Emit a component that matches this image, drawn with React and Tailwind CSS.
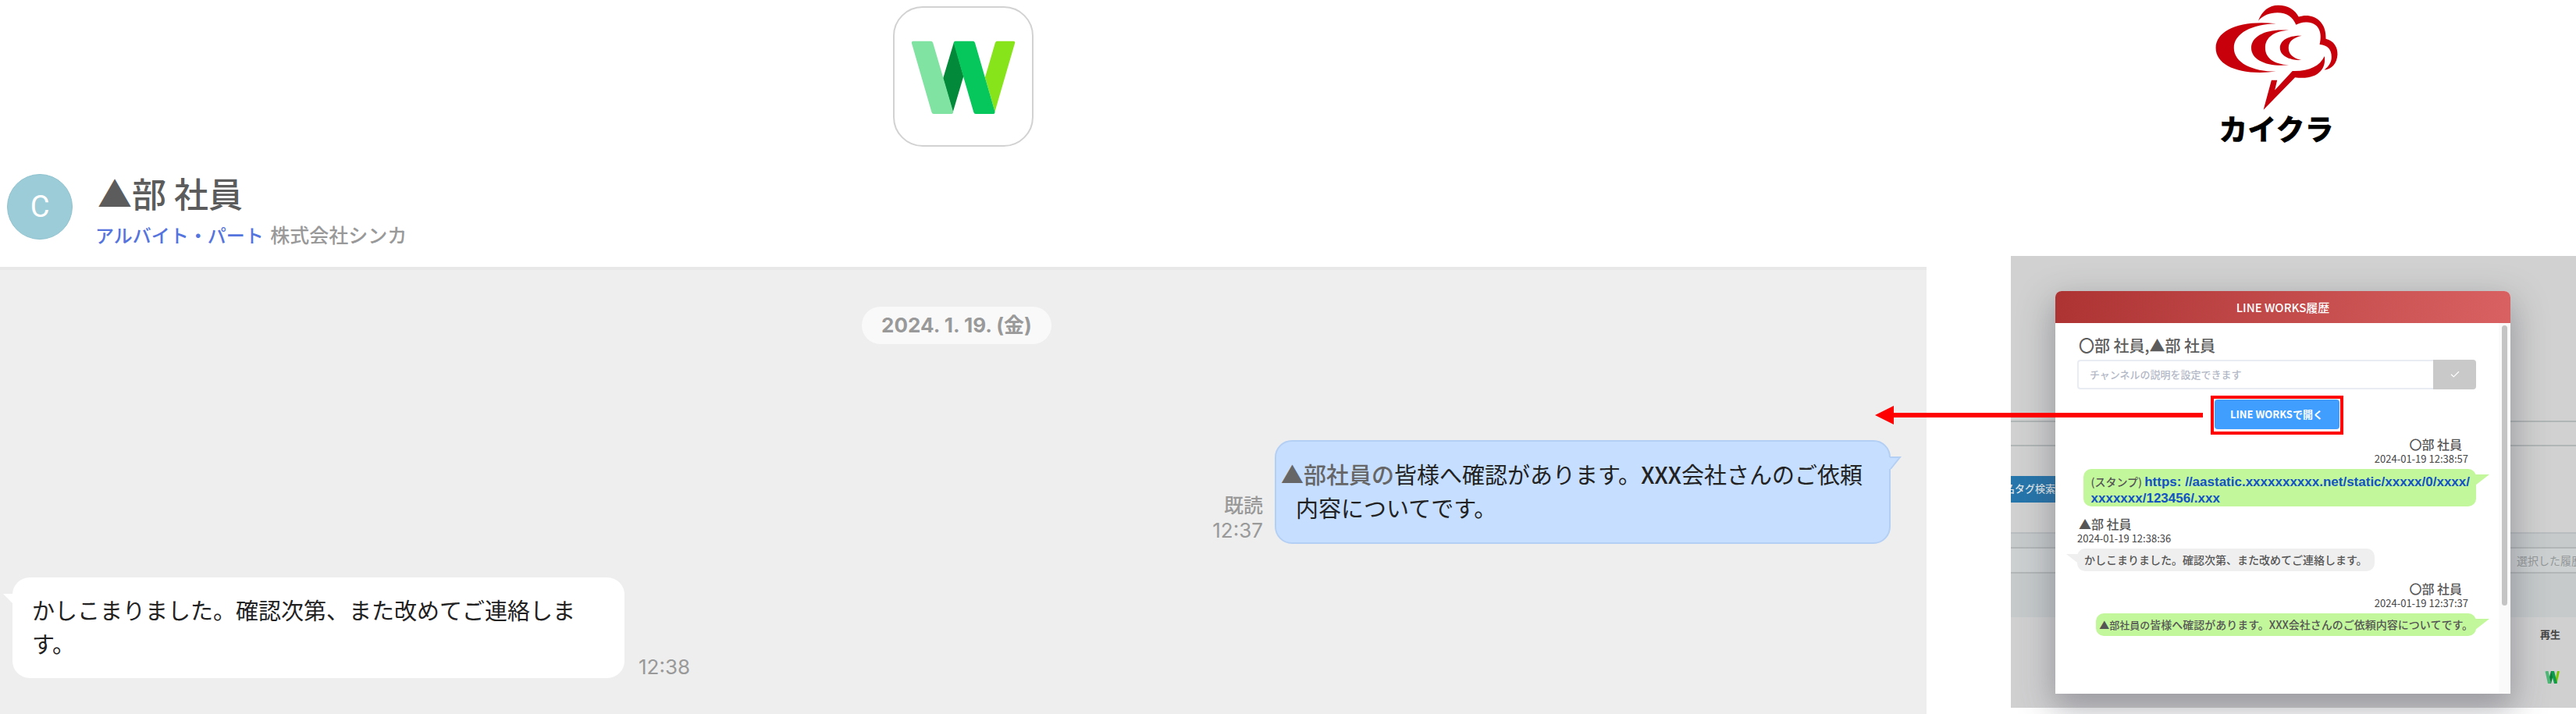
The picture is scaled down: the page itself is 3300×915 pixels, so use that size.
import { Check } from 'lucide-react';

const jp = "font-['Noto_Sans_CJK_JP','Noto_Sans',sans-serif]";

const WorksMark = ({ className }) => (
  <svg viewBox="260 158 402 286" className={className} aria-hidden="true">
    <path d="M592 160H655Q662 160 660 168L583 432L545 300L584 167Q586 160 592 160Z" fill="#88e41a" />
    <path d="M425 164L462 296L421 434L383 304Z" fill="#02893a" />
    <path d="M268 160H336Q342 160 344 166L422 432Q423 441 415 441H347Q341 441 339 434L262 168Q261 160 268 160Z" fill="#80e3a2" />
    <path d="M430 160H498Q504 160 506 166L583 432Q584 441 577 441H509Q503 441 501 434L424 168Q424 160 430 160Z" fill="#06c75b" />
  </svg>
);

const WorksBadge = () => (
  <svg viewBox="0 0 20 16" className="mt-[37px] h-4 w-5" fill="none" strokeWidth="4" aria-hidden="true">
    <path d="M14 16L17.5 0" stroke="#78c800" strokeWidth="3" />
    <path d="M6 16L10 0" stroke="#087d38" />
    <path d="M2.5 0L6 16" stroke="#4fb877" />
    <path d="M10 0L14 16" stroke="#0d9c4b" />
  </svg>
);

const KaikuraMark = () => (
  <svg viewBox="174 16 472 407" className="h-[135px] w-[157px]" fill="#c7000b" aria-hidden="true">
    <path d="M339 78C354 39 381 18 416 18C453 18 482 36 495 63C541 46 603 71 600 148C632 156 646 181 645 209C643 243 623 266 594 268C612 254 622 238 622 218C622 188 606 173 576 170C588 122 572 86 527 84C510 83 497 87 485 94C472 63 450 47 413 47C382 47 359 57 339 78Z" />
    <path d="M408 89C270 74 175 114 175 183C175 252 270 291 408 274C316 274 245 240 245 183C245 126 316 91 408 89Z" />
    <path d="M457 115C372 107 312 136 312 183C312 229 372 257 457 249C400 246 366 222 366 183C366 143 400 118 457 115Z" />
    <path d="M507 136C458 134 423 153 423 183C423 212 458 231 505 230C473 222 456 207 456 183C456 159 473 144 507 136Z" />
    <path d="M595 215C602 266 568 308 481 297L359 422L390 308H412L403 346L471 272C535 274 576 254 595 215Z" />
  </svg>
);

const Message = ({ name, time, mine, first, children }) => (
  <div className={`flex flex-col ${mine ? 'items-end' : 'items-start'} ${first ? 'mt-[2px]' : 'mt-3'}`}>
    <span className={`text-[16px] leading-[21px] text-[#555] ${mine ? 'pr-[18px]' : 'pl-[2px]'}`}>{name}</span>
    <time className={`text-[13px] leading-4 font-normal text-[#444] ${mine ? 'pr-[10px]' : ''}`}>{time}</time>
    <div
      className={`relative mt-[5px] rounded-[10px] text-[14px] text-[#555] ${
        mine ? 'bg-[#c3f79b]' : 'bg-[#efefef]'
      }`}
    >
      {children}
      <svg
        viewBox="0 0 18 14"
        className={`absolute top-[7px] h-[14px] w-[18px] ${mine ? 'left-full -ml-px' : 'right-full -mr-1 -scale-x-100'}`}
        aria-hidden="true"
      >
        <path d="M0 0H18L0 14Z" fill={mine ? '#c3f79b' : '#efefef'} />
      </svg>
    </div>
  </div>
);

const Chat = () => (
  <section className="flex min-w-0 flex-[2468] flex-col">
    <div className="flex justify-center pt-2">
      <div className="flex size-[180px] items-center justify-center rounded-[38px] border-2 border-[#d2d2d2] bg-white pt-[3px]">
        <WorksMark className="h-[95px] w-[134px]" />
      </div>
    </div>

    <header className="flex items-start pt-[35px] pb-[23px] pl-[9px]">
      <div className="flex size-[84px] items-center justify-center rounded-full border border-[#8fc3cf] bg-[#9bccd8] font-[Roboto,sans-serif] text-[38px] leading-none text-white">
        C
      </div>
      <div className="ml-[29px] font-medium">
        <h1 className="pl-[3px] text-[44px] leading-[48px] text-[#5c5c5c]">▲部 社員</h1>
        <p className="mt-[11px] text-[24px] leading-9 text-[#999]">
          <a href="#" className="text-[#5574dd]">アルバイト・パート</a>{' '}
          <span className="ml-[3px] text-[25px]">株式会社シンカ</span>
        </p>
      </div>
    </header>

    <div className="border-t-4 border-[#e8e8e8] bg-[#eee] pt-[47px] pb-[46px]">
      <div className="flex justify-center pr-[17px]">
        <time className="rounded-full bg-[#f9f9f9] px-[25px] font-[Inter,'Noto_Sans_CJK_JP',sans-serif] text-[26px] leading-[48px] font-bold text-[#999]">
          2024. 1. 19. (金)
        </time>
      </div>

      <div className="mt-[123px] flex items-end justify-end gap-[15px] pr-[46px]">
        <div className="text-right text-[25px] leading-[34px] font-medium text-[#999]">
          <div>既読</div>
          <time className="block font-[Inter,sans-serif] text-[26px] font-normal">12:37</time>
        </div>
        <div className="relative w-[789px] rounded-[22px] border-2 border-[#b3cff4] bg-[#c6deff] pt-5 pb-[23px] pl-[25px] -indent-[19px] text-[29px] leading-[43px] text-[#222]">
          <span className="font-medium text-[#666]">▲部社員の</span>皆様へ確認があります。
          <span className="font-medium">XXX</span>会社さんのご依頼
          <div className="indent-0">内容についてです。</div>
          <svg viewBox="0 0 16 18" className="absolute top-[19px] left-full h-[18px] w-[16px]" aria-hidden="true">
            <path d="M0 1H14L2 16H0Z" fill="#c6deff" />
            <path d="M1 1H14L2 16" fill="none" stroke="#b3cff4" strokeWidth="2" />
          </svg>
        </div>
      </div>

      <div className="mt-[43px] flex items-end gap-[18px] pl-4">
        <div className="relative w-[784px] rounded-[22px] bg-white pt-5 pb-[23px] pl-[25px] text-[29px] leading-[43px] text-[#222]">
          かしこまりました。確認次第、また改めてご連絡しま
          <br />
          す。
          <svg viewBox="0 0 12 12" className="absolute top-[21px] right-full size-3" aria-hidden="true">
            <path d="M0 0H12V12Z" fill="#fff" />
          </svg>
        </div>
        <time className="font-[Inter,sans-serif] text-[26px] leading-7 text-[#999]">12:38</time>
      </div>
    </div>
  </section>
);

// Page behind the dialog, dimmed
const Backdrop = () => (
  <div className="flex h-full flex-col bg-[#d1d1d1] text-[14px]">
    <div className="h-[211px]" />
    <div className="h-[33px] border-y-2 border-[#b0b5b5]" />
    <div className="flex h-[110px] items-center">
      <div className="flex h-[34px] w-[57px] justify-end overflow-hidden bg-[#2675ab] whitespace-nowrap text-[#dfe5e9]">
        <span className="text-[13px] leading-[31px] font-medium">名タグ検索</span>
      </div>
    </div>
    <div className="h-[109px] border-t-2 border-[#b9bdbf] bg-[#c6cacb] pt-[17px]">
      <div className="flex h-[34px] justify-end border-y-2 border-[#b2b6b7] bg-[#cdd0d1]">
        <div className="w-[76px] overflow-hidden whitespace-nowrap text-[#939899]">
          <span className="leading-[30px]">選択した履歴</span>
        </div>
      </div>
    </div>
    <div className="flex flex-1 flex-col items-end bg-[#d1d0d1] pt-3 pr-5">
      <span className="text-[13px] leading-5 font-bold text-[#444]">再生</span>
      <WorksBadge />
    </div>
  </div>
);

const HistoryDialog = () => (
  <div
    role="dialog"
    aria-label="LINE WORKS履歴"
    className="flex flex-1 flex-col rounded-t-lg bg-white shadow-[0_16px_44px_4px_rgba(60,62,75,0.38)]"
  >
    <h2 className="rounded-t-lg bg-linear-100 from-[#ad3333] to-[#d96161] text-center text-[15px] leading-[41px] font-medium text-white">
      LINE WORKS履歴
    </h2>
    <div className="flex flex-1">
      <div className="flex-1 pt-[14px] pr-[29px] pl-7">
        <h3 className="pl-[2px] text-[20px] leading-[30px] font-medium text-[#5c5c5c]">〇部 社員,▲部 社員</h3>
        <form className="mt-[3px] flex h-[38px]" onSubmit={(e) => e.preventDefault()}>
          <input
            type="text"
            aria-label="チャンネルの説明"
            placeholder="チャンネルの説明を設定できます"
            className="min-w-0 flex-1 rounded-l border-2 border-r-0 border-[#eaecf3] px-[14px] text-[13px] font-medium placeholder:text-[#b3b8c6]"
          />
          <button type="submit" aria-label="保存" className="flex w-[55px] items-center justify-center rounded-r bg-[#c9c9c9] text-white">
            <Check className="size-[14px]" strokeWidth={2} />
          </button>
        </form>

        <div className="mt-2 flex justify-center">
          <div className="relative border-4 border-[#f00] p-px pb-[3px]">
            <button type="button" className="block h-[38px] w-[160px] rounded bg-[#409eff] text-[13px] font-bold text-white">
              LINE WORKSで開く
            </button>
            <svg viewBox="0 0 420 24" className="absolute top-1/2 right-full mr-[14px] h-6 w-[420px] -translate-y-1/2" fill="#f00" aria-hidden="true">
              <path d="M0 12L24 0V9H420V15H24V24Z" />
            </svg>
          </div>
        </div>

        <div className="font-medium">
          <Message name="〇部 社員" time="2024-01-19 12:38:57" mine first>
            <p className="pt-[6px] pr-2 pl-[10px] leading-5">
              (スタンプ){' '}
              <a href="#" className="font-['Liberation_Sans',Arial,sans-serif] text-[17px] font-bold text-[#1253c4]">
                https: //aastatic.xxxxxxxxxx.net/static/xxxxx/0/xxxx/
                <br />
                xxxxxxx/123456/.xxx
              </a>
            </p>
          </Message>
          <Message name="▲部 社員" time="2024-01-19 12:38:36">
            <p className="px-[9px] leading-[29px]">かしこまりました。確認次第、また改めてご連絡します。</p>
          </Message>
          <Message name="〇部 社員" time="2024-01-19 12:37:37" mine>
            <p className="pr-1 pl-[4px] leading-[29px]">
              <span className="text-[13px]">▲部社員の</span>皆様へ確認があります。XXX会社さんのご依頼内容についてです。
            </p>
          </Message>
        </div>
      </div>
      <div className="w-[15px] bg-[#fafafa] px-1 pt-[3px]">
        <div className="h-[359px] rounded-full bg-[#c4c4c4]" />
      </div>
    </div>
  </div>
);

const Kaikura = () => (
  <section className="min-w-0 flex-[724]">
    <div className="flex flex-col items-center pt-[6px] pr-[44px]">
      <KaikuraMark />
      <span className="text-[37px] leading-[46px] font-black text-black">カイクラ</span>
    </div>
    <div className="relative mt-[141px] h-[579px]">
      <div className="absolute inset-0">
        <Backdrop />
      </div>
      <div className="absolute inset-0 flex pt-[45px] pr-[84px] pb-[18px] pl-[57px]">
        <HistoryDialog />
      </div>
    </div>
  </section>
);

const App = () => (
  <main className={`flex gap-[108px] bg-white ${jp}`}>
    <Chat />
    <Kaikura />
  </main>
);

export default App;
